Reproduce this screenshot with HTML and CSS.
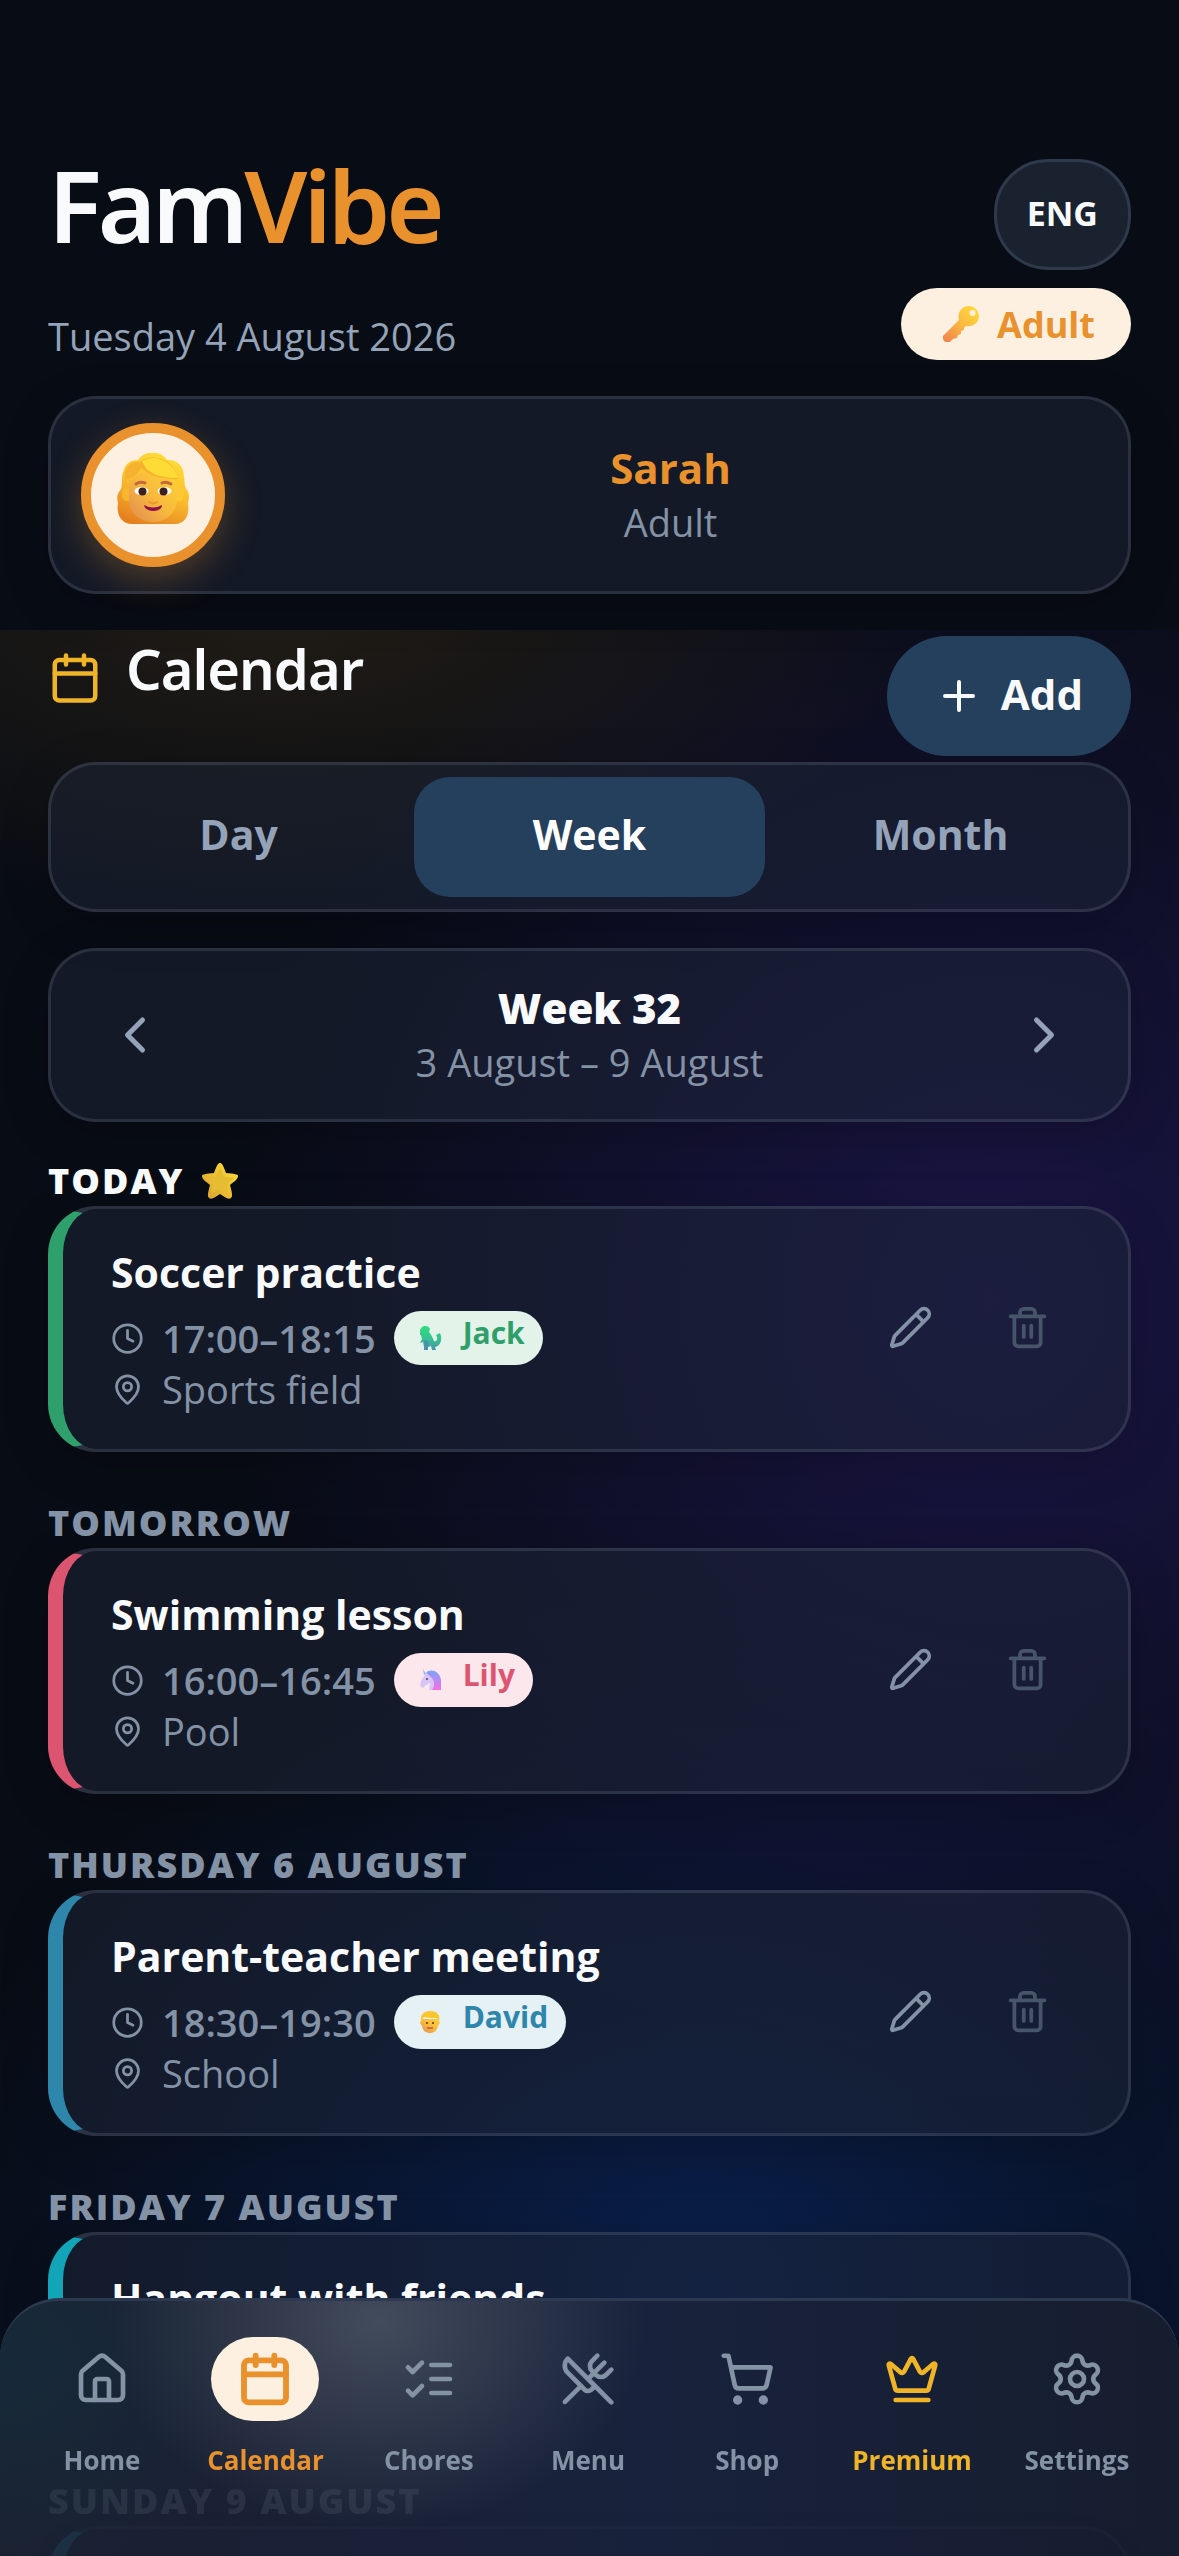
FILE: index.html
```html
<!DOCTYPE html>
<html lang="en">
<head>
<meta charset="utf-8">
<meta name="viewport" content="width=device-width, initial-scale=1">
<title>FamVibe – Calendar</title>
<link rel="stylesheet" href="styles.css">
</head>
<body>
<svg class="sprite" aria-hidden="true">
  <defs>
    <linearGradient id="gold" x1="1" y1="0" x2="0" y2="1"><stop offset="0" stop-color="#ffe03a"/><stop offset=".5" stop-color="#fbb741"/><stop offset="1" stop-color="#ee7f4d"/></linearGradient>
    <linearGradient id="starfill" x1="1" y1="0" x2="0" y2="1"><stop offset="0" stop-color="#ffe23c"/><stop offset=".5" stop-color="#edc02f"/><stop offset="1" stop-color="#d9a032"/></linearGradient>
    <linearGradient id="hair" x1=".7" y1="0" x2=".3" y2="1"><stop offset="0" stop-color="#ffdf35"/><stop offset=".5" stop-color="#fbbd2e"/><stop offset="1" stop-color="#e5801f"/></linearGradient>
    <linearGradient id="face" x1="1" y1="0" x2="0" y2="1"><stop offset="0" stop-color="#ffd338"/><stop offset=".5" stop-color="#f8b93c"/><stop offset="1" stop-color="#e08a55"/></linearGradient>
    <linearGradient id="mane" x1="0" y1="0" x2="0" y2="1"><stop offset="0" stop-color="#7aa4f5"/><stop offset=".5" stop-color="#b98af2"/><stop offset="1" stop-color="#f56fe0"/></linearGradient>
    <linearGradient id="dino" x1="0" y1="0" x2="0" y2="1"><stop offset="0" stop-color="#2fe07c"/><stop offset=".6" stop-color="#37bd92"/><stop offset="1" stop-color="#4a8fae"/></linearGradient>
  </defs>
  <symbol id="i-calendar" viewBox="0 0 24 24"><path d="M8 2v4M16 2v4M3 10h18"/><rect x="3" y="4" width="18" height="18" rx="2"/></symbol>
  <symbol id="i-plus" viewBox="0 0 24 24"><path d="M5 12h14M12 5v14"/></symbol>
  <symbol id="i-left" viewBox="0 0 24 24"><path d="m15 18-6-6 6-6"/></symbol>
  <symbol id="i-right" viewBox="0 0 24 24"><path d="m9 18 6-6-6-6"/></symbol>
  <symbol id="i-clock" viewBox="0 0 24 24"><circle cx="12" cy="12" r="10"/><path d="M12 6v6l4 2"/></symbol>
  <symbol id="i-pin" viewBox="0 0 24 24"><path d="M20 10c0 4.993-5.539 10.193-7.399 11.799a1 1 0 0 1-1.202 0C9.539 20.193 4 14.993 4 10a8 8 0 0 1 16 0"/><circle cx="12" cy="10" r="3"/></symbol>
  <symbol id="i-pencil" viewBox="0 0 24 24"><path d="M21.174 6.812a1 1 0 0 0-3.986-3.987L3.842 16.174a2 2 0 0 0-.5.83l-1.321 4.352a.5.5 0 0 0 .623.622l4.353-1.32a2 2 0 0 0 .83-.497zM15 5l4 4"/></symbol>
  <symbol id="i-trash" viewBox="0 0 24 24"><path d="M3 6h18M19 6v14a2 2 0 0 1-2 2H7a2 2 0 0 1-2-2V6M8 6V4a2 2 0 0 1 2-2h4a2 2 0 0 1 2 2v2M10 11v6M14 11v6"/></symbol>
  <symbol id="i-home" viewBox="0 0 24 24"><path d="M15 21v-8a1 1 0 0 0-1-1h-4a1 1 0 0 0-1 1v8"/><path d="M3 10a2 2 0 0 1 .709-1.528l7-5.999a2 2 0 0 1 2.582 0l7 5.999A2 2 0 0 1 21 10v9a2 2 0 0 1-2 2H5a2 2 0 0 1-2-2z"/></symbol>
  <symbol id="i-chores" viewBox="0 0 24 24"><path d="m3 17 2 2 4-4M3 7l2 2 4-4M13 6h8M13 12h8M13 18h8"/></symbol>
  <symbol id="i-menu" viewBox="0 0 24 24"><path d="m16 2-2.3 2.3a3 3 0 0 0 0 4.2l1.8 1.8a3 3 0 0 0 4.2 0L22 8M15 15 3.3 3.3a4.2 4.2 0 0 0 0 6l7.3 7.3c.7.7 2 .7 2.8 0L15 15Zm0 0 7 7M2.1 21.8l6.4-6.3M19 5l-7 7"/></symbol>
  <symbol id="i-shop" viewBox="0 0 24 24"><circle cx="8" cy="21" r="1"/><circle cx="19" cy="21" r="1"/><path d="M2.05 2.05h2l2.66 12.42a2 2 0 0 0 2 1.58h9.78a2 2 0 0 0 1.95-1.57l1.65-7.43H5.12"/></symbol>
  <symbol id="i-crown" viewBox="0 0 24 24"><path d="M11.562 3.266a.5.5 0 0 1 .876 0L15.39 8.87a1 1 0 0 0 1.516.294L21.183 5.5a.5.5 0 0 1 .798.519l-2.834 10.246a1 1 0 0 1-.956.734H5.81a1 1 0 0 1-.957-.734L2.02 6.02a.5.5 0 0 1 .798-.519l4.276 3.664a1 1 0 0 0 1.516-.294zM5 21h14"/></symbol>
  <symbol id="i-gear" viewBox="0 0 24 24"><path d="M9.671 4.136a2.34 2.34 0 0 1 4.659 0 2.34 2.34 0 0 0 3.319 1.915 2.34 2.34 0 0 1 2.33 4.033 2.34 2.34 0 0 0 0 3.831 2.34 2.34 0 0 1-2.33 4.033 2.34 2.34 0 0 0-3.319 1.915 2.34 2.34 0 0 1-4.659 0 2.34 2.34 0 0 0-3.32-1.915 2.34 2.34 0 0 1-2.33-4.033 2.34 2.34 0 0 0 0-3.831A2.34 2.34 0 0 1 6.35 6.051a2.34 2.34 0 0 0 3.319-1.915"/><circle cx="12" cy="12" r="3"/></symbol>
</svg>

<div class="app">
  <header class="header">
    <div class="header-top">
      <div class="brand">
        <div class="logo">Fam<span class="logo-accent">Vibe</span></div>
        <p class="date">Tuesday 4 August 2026</p>
      </div>
      <div class="header-side">
        <button class="lang" type="button">ENG</button>
        <span class="role">
          <svg class="role-icon" viewBox="0 0 36 36" aria-hidden="true"><path fill="url(#gold)" fill-rule="evenodd" d="M26 0a10 10 0 0 1 10 10c0 7-6 11-13 10l-2 2v2l-3 1v3l-3 1-1 3-4 1-3 3c-2 2-7 0-7-4v-2L16 14C14 6 19 0 26 0Zm3.500 4a3 3 0 1 0 .1 6 3 3 0 0 0-.1-6Z"/></svg>
          Adult
        </span>
      </div>
    </div>
    <section class="card profile">
      <span class="avatar">
        <svg class="avatar-face" viewBox="0 0 72 72" aria-hidden="true">
          <path fill="url(#hair)" d="M21 7C27-3 44-3 50 7c10-1 17 6 17 17 1 5 0 9 3 13 3 5 2 9 1 13 2 12-3 21-13 21H15C4 71-1 61 1 50c-2-7 0-10 3-14 2-7 0-14 3-19C9 10 14 7 21 7Z"/>
          <ellipse cx="10" cy="41" rx="5" ry="7" fill="#f9b62f"/><ellipse cx="62" cy="41" rx="5" ry="7" fill="#fcc934"/>
          <path fill="url(#face)" d="M12 36c0-12 10-18 24-18s24 7 24 18v10c0 14-11 23-24 23S12 60 12 46Z"/>
          <path fill="#f6b22e" d="M8 27C7 14 14 7 23 9c8-8 28-5 34 7 3 4 4 7 4 10-13 0-28-2-37-11-3 6-8 10-16 12Z"/>
          <path fill="#ffdc35" d="M25 8c14-8 32 1 36 17-12 0-31-2-36-17Z"/>
          <path fill="none" stroke="#c46a3c" stroke-width="3" stroke-linecap="round" d="M19 31q4-3 9-1M45 30q4-2 9 1"/>
          <ellipse cx="24.500" cy="38" rx="7" ry="4" fill="#fff"/><ellipse cx="47.500" cy="38" rx="7" ry="4" fill="#fff"/>
          <circle cx="25.500" cy="38.500" r="4" fill="#3b2020"/><circle cx="46.500" cy="38.500" r="4" fill="#3b2020"/>
          <path fill="none" stroke="#e9962e" stroke-width="2" stroke-linecap="round" d="M32 49q4 3 8 0"/>
          <path fill="#8d0f4b" d="M27 52q9 5 18 0c0 8-17 8-18 0Z"/>
        </svg>
      </span>
      <div class="stack">
        <strong class="profile-name">Sarah</strong>
        <span class="sub">Adult</span>
      </div>
    </section>
  </header>

  <main class="main">
    <div class="title-row">
      <svg class="icon title-icon" aria-hidden="true"><use href="#i-calendar"/></svg>
      <h1 class="title">Calendar</h1>
      <button class="add" type="button"><svg class="icon add-icon" aria-hidden="true"><use href="#i-plus"/></svg><span class="add-label">Add</span></button>
    </div>

    <div class="card tabs" role="tablist">
      <button class="tab" type="button" role="tab" aria-selected="false">Day</button>
      <button class="tab tab-active" type="button" role="tab" aria-selected="true">Week</button>
      <button class="tab" type="button" role="tab" aria-selected="false">Month</button>
    </div>

    <div class="card week">
      <button class="step" type="button" aria-label="Previous week"><svg class="icon step-icon"><use href="#i-left"/></svg></button>
      <div class="stack">
        <strong class="week-name">Week 32</strong>
        <span class="sub">3 August – 9 August</span>
      </div>
      <button class="step" type="button" aria-label="Next week"><svg class="icon step-icon"><use href="#i-right"/></svg></button>
    </div>

    <section class="day">
      <h2 class="day-name day-today">Today
        <svg class="star" viewBox="0 0 36 36" aria-hidden="true"><path fill="url(#starfill)" d="M18 0c2 0 3 2 6 10 8 1 12 1 12 3 0 3-3 5-8 9 2 8 3 11 1 13-3 2-6-1-11-4-5 3-8 6-11 4-2-2-1-5 1-13-5-4-8-6-8-9 0-2 4-2 12-3 3-8 4-10 6-10Z"/><path fill="#e6bd32" d="m18 5 4 9 10 1-7 6 1 9-8-4-8 4 1-9-7-6 10-1Z"/></svg>
      </h2>
      <article class="card event event-jack">
        <div class="event-body">
          <h3 class="event-title">Soccer practice</h3>
          <div class="event-time">
            <svg class="icon meta-icon" aria-hidden="true"><use href="#i-clock"/></svg><span>17:00–18:15</span>
            <span class="person"><svg class="person-icon" viewBox="0 0 24 24" aria-hidden="true"><path fill="url(#dino)" d="M4 1c3-2 7-1 8 2l-1 3c3 3 4 7 5 9 2 1 4-1 3-4l-1-2 4-2c3 7 0 13-5 14l1 3h-4l-1-4-3 1v3H6v-3l-1-5-3 1 2-4-1-4H2V4Z"/><path fill="#4a91ad" d="M6 14q5 0 5 5l-1 2v2H7l-1-5Z"/></svg><span class="person-name">Jack</span></span>
          </div>
          <div class="event-place"><svg class="icon meta-icon" aria-hidden="true"><use href="#i-pin"/></svg><span>Sports field</span></div>
        </div>
        <div class="actions">
          <button class="action" type="button" aria-label="Edit"><svg class="icon action-icon"><use href="#i-pencil"/></svg></button>
          <button class="action action-delete" type="button" aria-label="Delete"><svg class="icon action-icon"><use href="#i-trash"/></svg></button>
        </div>
      </article>
    </section>

    <section class="day">
      <h2 class="day-name">Tomorrow</h2>
      <article class="card event event-lily">
        <div class="event-body">
          <h3 class="event-title">Swimming lesson</h3>
          <div class="event-time">
            <svg class="icon meta-icon" aria-hidden="true"><use href="#i-clock"/></svg><span>16:00–16:45</span>
            <span class="person"><svg class="person-icon" viewBox="0 0 24 24" aria-hidden="true"><path fill="#d9c4f7" d="m7 7 5-3 6 4v14h-7l1-7-4 2-3 3-3-2 1-5Z"/><path fill="#8fb4f6" d="M5 1l3 5-2 1Z"/><path fill="url(#mane)" d="M8 5c4-5 14-2 15 7v10h-9c3-4 3-9-1-13Z"/><circle cx="9" cy="11" r="1" fill="#5c3f80"/></svg><span class="person-name">Lily</span></span>
          </div>
          <div class="event-place"><svg class="icon meta-icon" aria-hidden="true"><use href="#i-pin"/></svg><span>Pool</span></div>
        </div>
        <div class="actions">
          <button class="action" type="button" aria-label="Edit"><svg class="icon action-icon"><use href="#i-pencil"/></svg></button>
          <button class="action action-delete" type="button" aria-label="Delete"><svg class="icon action-icon"><use href="#i-trash"/></svg></button>
        </div>
      </article>
    </section>

    <section class="day">
      <h2 class="day-name">Thursday 6 August</h2>
      <article class="card event event-david">
        <div class="event-body">
          <h3 class="event-title">Parent-teacher meeting</h3>
          <div class="event-time">
            <svg class="icon meta-icon" aria-hidden="true"><use href="#i-clock"/></svg><span>18:30–19:30</span>
            <span class="person"><svg class="person-icon" viewBox="0 0 24 24" aria-hidden="true"><path fill="url(#face)" d="M4 9h16l2 4-2 3c-1 5-4 7-8 7s-7-2-8-7l-2-3Z"/><path fill="#fbc52e" d="M3 11C2 5 6 1 12 1s11 3 9 10l-2-3C14 8 10 8 6 7Z"/><circle cx="9" cy="13" r="1" fill="#5b3420"/><circle cx="15" cy="13" r="1" fill="#5b3420"/><path stroke="#9a2f4a" d="M9 18h6"/></svg><span class="person-name">David</span></span>
          </div>
          <div class="event-place"><svg class="icon meta-icon" aria-hidden="true"><use href="#i-pin"/></svg><span>School</span></div>
        </div>
        <div class="actions">
          <button class="action" type="button" aria-label="Edit"><svg class="icon action-icon"><use href="#i-pencil"/></svg></button>
          <button class="action action-delete" type="button" aria-label="Delete"><svg class="icon action-icon"><use href="#i-trash"/></svg></button>
        </div>
      </article>
    </section>

    <section class="day">
      <h2 class="day-name">Friday 7 August</h2>
      <article class="card event event-friends">
        <div class="event-body"><h3 class="event-title">Hangout with friends</h3></div>
      </article>
    </section>

    <section class="day day-behind">
      <h2 class="day-name">Sunday 9 August</h2>
      <article class="card event event-david"></article>
    </section>
  </main>

  <nav class="nav" aria-label="Main">
    <a class="nav-item" href="#home"><span class="nav-pill"><svg class="icon nav-icon" aria-hidden="true"><use href="#i-home"/></svg></span>Home</a>
    <a class="nav-item nav-active" href="#calendar" aria-current="page"><span class="nav-pill"><svg class="icon nav-icon" aria-hidden="true"><use href="#i-calendar"/></svg></span>Calendar</a>
    <a class="nav-item" href="#chores"><span class="nav-pill"><svg class="icon nav-icon" aria-hidden="true"><use href="#i-chores"/></svg></span>Chores</a>
    <a class="nav-item" href="#menu"><span class="nav-pill"><svg class="icon nav-icon" aria-hidden="true"><use href="#i-menu"/></svg></span>Menu</a>
    <a class="nav-item" href="#shop"><span class="nav-pill"><svg class="icon nav-icon" aria-hidden="true"><use href="#i-shop"/></svg></span>Shop</a>
    <a class="nav-item nav-premium" href="#premium"><span class="nav-pill"><svg class="icon nav-icon" aria-hidden="true"><use href="#i-crown"/></svg></span>Premium</a>
    <a class="nav-item" href="#settings"><span class="nav-pill"><svg class="icon nav-icon" aria-hidden="true"><use href="#i-gear"/></svg></span>Settings</a>
  </nav>
</div>
</body>
</html>
```

FILE: styles.css
```css
:root {
  --bg: #080c14;
  --text: #f8fafc;
  --muted: #94a3b8;
  --subtle: #8492a6;
  --faint: #475569;
  --orange: #e8912d;
  --cream: #fdf0e1;
  --gold: #f0b429;
  --navy: #25405c;
  --line: rgba(148, 163, 184, 0.18);
}

* { box-sizing: border-box; }

body {
  margin: 0;
  background: var(--bg);
  color: var(--text);
  font-family: "Open Sans", sans-serif;
  font-size: 38px;
}

h1, h2, h3, p { margin: 0; }

button {
  margin: 0;
  padding: 0;
  border: 0;
  background: none;
  color: inherit;
  font: inherit;
}

.sprite {
  position: absolute;
  width: 0;
  height: 0;
}

.icon {
  flex: none;
  fill: none;
  stroke: currentColor;
  stroke-width: 2;
  stroke-linecap: round;
  stroke-linejoin: round;
}

.app {
  display: flex;
  flex-direction: column;
  height: 100vh;
  overflow: hidden;
}

.card {
  border: 3px solid var(--line);
  border-radius: 48px;
  background: rgba(30, 38, 56, 0.5);
  box-shadow: 0 12px 48px rgba(0, 0, 0, 0.2);
}

/* Header */
.header {
  flex: none;
  padding: 159px 48px 36px;
}

.header-top {
  display: flex;
  justify-content: space-between;
  margin-bottom: 36px;
}

.brand {
  display: flex;
  flex-direction: column;
  justify-content: space-between;
}

.logo {
  font-family: "Noto Sans", sans-serif;
  font-size: 100px;
  font-weight: 600;
  line-height: 90px;
  letter-spacing: -4px;
}

.logo-accent { color: var(--orange); }

.date {
  color: var(--muted);
  line-height: 48px;
}

.header-side {
  display: flex;
  flex-direction: column;
  align-items: flex-end;
  gap: 18px;
}

.lang {
  padding: 0 30px 3px;
  height: 111px;
  border: 3px solid #2e3a4b;
  border-radius: 54px;
  background: #1b222f;
  font-size: 34px;
  font-weight: 700;
}

.role {
  display: flex;
  align-items: center;
  gap: 18px;
  height: 72px;
  padding: 0 36px 0 42px;
  border-radius: 36px;
  background: var(--cream);
  color: var(--orange);
  font-size: 36px;
  font-weight: 700;
}

.role-icon {
  width: 36px;
  height: 36px;
}

.profile {
  display: flex;
  align-items: center;
  gap: 18px;
  min-height: 198px;
  padding: 24px 30px;
}

.avatar {
  display: flex;
  align-items: center;
  justify-content: center;
  width: 144px;
  height: 144px;
  border: 10px solid var(--orange);
  border-radius: 50%;
  background: var(--cream);
  box-shadow: 0 12px 36px rgba(232, 145, 45, 0.3);
}

.avatar-face {
  width: 72px;
  height: 72px;
  margin-bottom: 12px;
}

.stack {
  display: flex;
  flex: 1;
  flex-direction: column;
  text-align: center;
  line-height: 54px;
}

.profile-name {
  color: var(--orange);
  font-size: 42px;
  font-weight: 700;
}

.sub {
  color: var(--subtle);
  font-weight: 500;
}

/* Main */
.main {
  flex: 1;
  min-height: 0;
  padding: 6px 48px 0;
  overflow: hidden;
  background:
    radial-gradient(ellipse 660px 320px at 24% -30px, rgba(220, 150, 35, 0.12), transparent),
    radial-gradient(ellipse 780px 820px at 84% 670px, #1a1546, transparent),
    radial-gradient(ellipse 800px 700px at 60% 1660px, #0a1f4b, transparent);
}

.title-row {
  display: flex;
  align-items: flex-start;
  gap: 24px;
  margin-bottom: 6px;
}

.title-icon {
  width: 54px;
  height: 54px;
  margin-top: 15px;
  color: var(--gold);
}

.title {
  flex: 1;
  font-family: "Noto Sans", sans-serif;
  font-size: 56px;
  font-weight: 600;
  line-height: 64px;
  letter-spacing: -1px;
}

.add {
  display: flex;
  align-items: center;
  gap: 18px;
  height: 120px;
  padding: 0 48px;
  border-radius: 60px;
  background: var(--navy);
  font-size: 42px;
  font-weight: 700;
}

.add-icon {
  width: 48px;
  height: 48px;
}

.add-label { padding-bottom: 6px; }

.tabs {
  display: flex;
  margin-bottom: 36px;
  padding: 12px;
}

.tab {
  flex: 1;
  height: 120px;
  padding-bottom: 6px;
  border-radius: 36px;
  color: var(--muted);
  font-size: 41px;
  font-weight: 700;
}

.tab-active {
  background: var(--navy);
  color: #fff;
}

.week {
  display: flex;
  align-items: center;
  margin-bottom: 34px;
  padding: 24px;
}

.week-name {
  font-size: 42px;
  font-weight: 800;
}

.step {
  display: flex;
  align-items: center;
  justify-content: center;
  width: 120px;
  height: 120px;
  color: var(--muted);
}

.step-icon {
  width: 60px;
  height: 60px;
}

/* Day groups */
.day { margin-bottom: 46px; }

.day-name {
  display: flex;
  align-items: center;
  gap: 18px;
  color: var(--subtle);
  font-size: 36px;
  font-weight: 800;
  line-height: 50px;
  letter-spacing: 2px;
  text-transform: uppercase;
}

.day-today { color: var(--text); }

.star {
  width: 36px;
  height: 36px;
}

.event {
  --accent: #2f9f6b;
  --tint: #e4f3ea;
  display: flex;
  align-items: center;
  min-height: 198px;
  padding: 36px 42px 36px 48px;
  border-left: 15px solid var(--accent);
}

.event-lily { --accent: #dc5570; --tint: #fce8ec; }
.event-david { --accent: #2e86ab; --tint: #e6f1f6; }
.event-friends { --accent: #12a5b8; --tint: #e2f5f7; align-items: flex-start; }

.event-body { flex: 1; }

.event-title {
  margin-bottom: 12px;
  font-size: 41px;
  font-weight: 700;
  line-height: 54px;
}

.event-time,
.event-place {
  display: flex;
  align-items: center;
  gap: 18px;
  color: var(--subtle);
  line-height: 48px;
}

.event-time { font-weight: 600; }

.meta-icon {
  width: 33px;
  height: 33px;
}

.person {
  display: flex;
  align-items: center;
  gap: 21px;
  height: 54px;
  padding: 0 18px 0 24px;
  border-radius: 27px;
  background: var(--tint);
}

.person-icon {
  width: 24px;
  height: 24px;
}

.person-name {
  align-self: flex-start;
  color: var(--accent);
  font-size: 30px;
  font-weight: 700;
  line-height: 44px;
}

.actions {
  display: flex;
  padding-bottom: 3px;
}

.action {
  display: flex;
  align-items: center;
  justify-content: center;
  width: 117px;
  height: 117px;
  color: var(--subtle);
}

.action-delete { color: var(--faint); }

.action-icon {
  width: 45px;
  height: 45px;
}

/* The last group shows faintly through the navigation bar */
.day-behind {
  position: relative;
  z-index: 2;
  opacity: 0.14;
  pointer-events: none;
}

/* Bottom navigation */
.nav {
  position: fixed;
  inset: auto 0 0;
  display: flex;
  justify-content: space-between;
  align-items: flex-start;
  height: 258px;
  padding: 36px 48px 0;
  border-top: 3px solid #2c3950;
  border-radius: 60px 60px 0 0;
  background:
    radial-gradient(ellipse 270px 210px at 32% 20px, rgba(108, 118, 128, 0.5), transparent),
    radial-gradient(ellipse 260px 240px at 0 60px, rgba(20, 46, 60, 0.7), transparent),
    linear-gradient(90deg, #1b2030, #18223c 55%, #161d2e);
}

.nav-item {
  display: flex;
  flex-direction: column;
  align-items: center;
  gap: 18px;
  color: var(--subtle);
  font-size: 26px;
  font-weight: 700;
  line-height: 42px;
  text-decoration: none;
}

.nav-pill {
  display: flex;
  align-items: center;
  justify-content: center;
  width: 108px;
  height: 84px;
  border-radius: 42px;
}

.nav-icon {
  width: 56px;
  height: 56px;
}

.nav-active { color: var(--orange); }
.nav-active .nav-pill { background: var(--cream); }
.nav-active .nav-icon { stroke-width: 2.5; }
.nav-premium { color: var(--gold); }
```
